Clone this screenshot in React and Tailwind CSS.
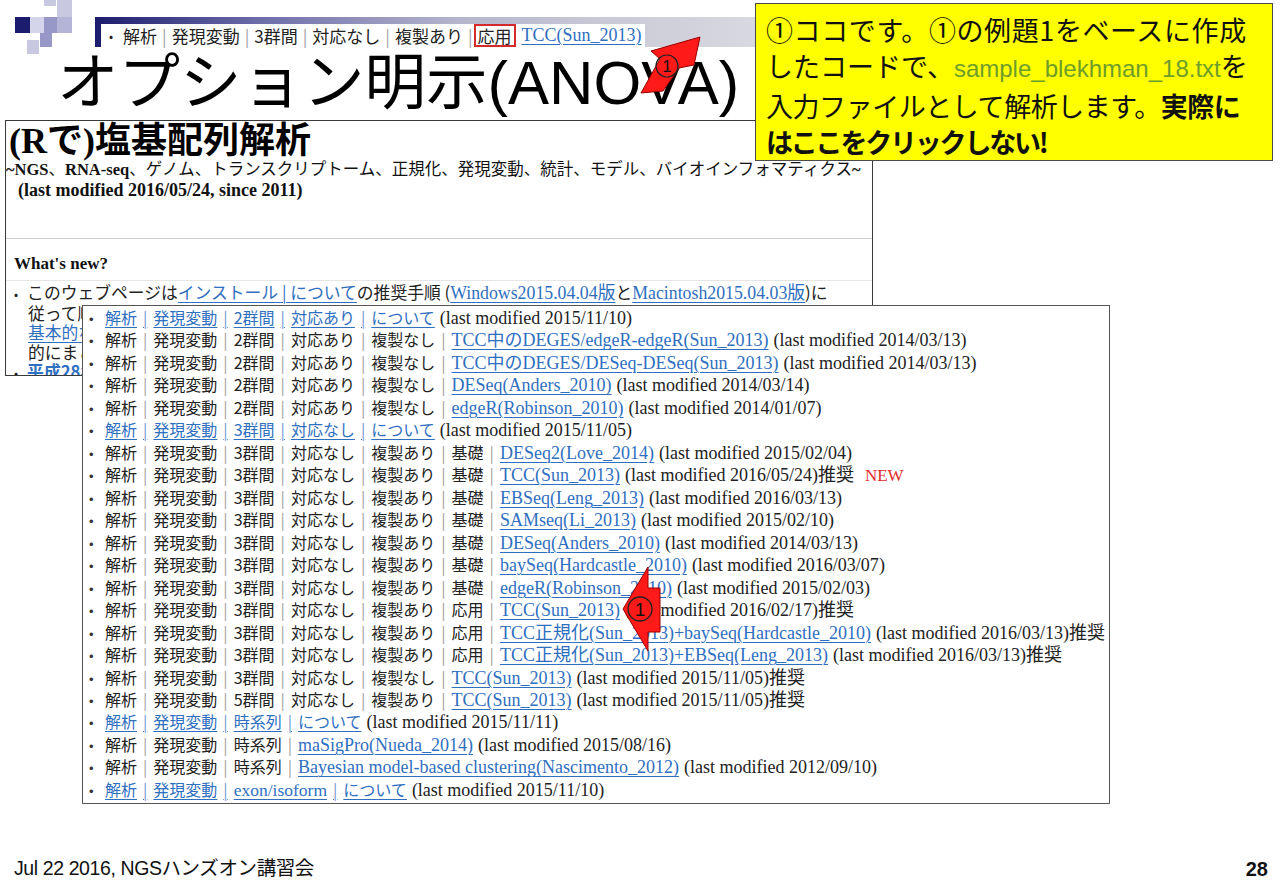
import React from "react";

const JPF = "font-['Noto_Sans_CJK_JP',sans-serif]";
const SERIF = "font-['Liberation_Serif','Noto_Sans_CJK_JP',serif]";

const rows = [
  { cat: ["解析", "発現変動", "2群間", "対応あり"], about: true, date: "2015/11/10" },
  { cat: ["解析", "発現変動", "2群間", "対応あり", "複製なし"], link: "TCC中のDEGES/edgeR-edgeR(Sun_2013)", date: "2014/03/13" },
  { cat: ["解析", "発現変動", "2群間", "対応あり", "複製なし"], link: "TCC中のDEGES/DESeq-DESeq(Sun_2013)", date: "2014/03/13" },
  { cat: ["解析", "発現変動", "2群間", "対応あり", "複製なし"], link: "DESeq(Anders_2010)", date: "2014/03/14" },
  { cat: ["解析", "発現変動", "2群間", "対応あり", "複製なし"], link: "edgeR(Robinson_2010)", date: "2014/01/07" },
  { cat: ["解析", "発現変動", "3群間", "対応なし"], about: true, date: "2015/11/05" },
  { cat: ["解析", "発現変動", "3群間", "対応なし", "複製あり", "基礎"], link: "DESeq2(Love_2014)", date: "2015/02/04" },
  { cat: ["解析", "発現変動", "3群間", "対応なし", "複製あり", "基礎"], link: "TCC(Sun_2013)", date: "2016/05/24", rec: true, isNew: true },
  { cat: ["解析", "発現変動", "3群間", "対応なし", "複製あり", "基礎"], link: "EBSeq(Leng_2013)", date: "2016/03/13" },
  { cat: ["解析", "発現変動", "3群間", "対応なし", "複製あり", "基礎"], link: "SAMseq(Li_2013)", date: "2015/02/10" },
  { cat: ["解析", "発現変動", "3群間", "対応なし", "複製あり", "基礎"], link: "DESeq(Anders_2010)", date: "2014/03/13" },
  { cat: ["解析", "発現変動", "3群間", "対応なし", "複製あり", "基礎"], link: "baySeq(Hardcastle_2010)", date: "2016/03/07" },
  { cat: ["解析", "発現変動", "3群間", "対応なし", "複製あり", "基礎"], link: "edgeR(Robinson_2010)", date: "2015/02/03" },
  { cat: ["解析", "発現変動", "3群間", "対応なし", "複製あり", "応用"], link: "TCC(Sun_2013)", date: "2016/02/17", rec: true },
  { cat: ["解析", "発現変動", "3群間", "対応なし", "複製あり", "応用"], link: "TCC正規化(Sun_2013)+baySeq(Hardcastle_2010)", date: "2016/03/13", rec: true },
  { cat: ["解析", "発現変動", "3群間", "対応なし", "複製あり", "応用"], link: "TCC正規化(Sun_2013)+EBSeq(Leng_2013)", date: "2016/03/13", rec: true },
  { cat: ["解析", "発現変動", "3群間", "対応なし", "複製なし"], link: "TCC(Sun_2013)", date: "2015/11/05", rec: true },
  { cat: ["解析", "発現変動", "5群間", "対応なし", "複製あり"], link: "TCC(Sun_2013)", date: "2015/11/05", rec: true },
  { cat: ["解析", "発現変動", "時系列"], about: true, date: "2015/11/11" },
  { cat: ["解析", "発現変動", "時系列"], link: "maSigPro(Nueda_2014)", date: "2015/08/16" },
  { cat: ["解析", "発現変動", "時系列"], link: "Bayesian model-based clustering(Nascimento_2012)", date: "2012/09/10" },
  { cat: ["解析", "発現変動", "exon/isoform"], about: true, date: "2015/11/10" },
];

function Sep({ blue, m = "mx-[6px]" }) {
  return <span className={`${m} ${blue ? "text-[#6f98d2]" : "text-[#a0a0a0]"}`}>|</span>;
}

function Row({ r }) {
  return (
    <li className="flex items-baseline whitespace-nowrap h-[22.47px] leading-[22.47px]">
      <span className="w-[22px] pl-[6px] text-[#333] text-[13px]">•</span>
      {r.about ? (
        <span className={`${JPF} text-[#2f6fbf] underline decoration-1 underline-offset-[3px] text-[16px]`}>
          {r.cat.map((c, i) => (
            <React.Fragment key={i}>
              {i > 0 && <Sep blue />}
              {c === "exon/isoform" ? <span className={`${SERIF} text-[17.5px]`}>{c}</span> : c}
            </React.Fragment>
          ))}
          <Sep blue />
          について
        </span>
      ) : (
        <>
          <span className={`${JPF} text-[#222] text-[16px]`}>
            {r.cat.map((c, i) => (
              <React.Fragment key={i}>
                {i > 0 && <Sep />}
                {c}
              </React.Fragment>
            ))}
            <Sep />
          </span>
          <span className={`${SERIF} text-[#2f6fbf] underline decoration-1 underline-offset-[3px] text-[18px]`}>{r.link}</span>
        </>
      )}
      <span className={`${SERIF} text-[#222] text-[18px] ml-[5px]`}>
        (last modified {r.date}){r.rec ? "推奨" : ""}
      </span>
      {r.isNew && <span className={`${SERIF} text-[#e02a2a] text-[17px] ml-[11px]`}>NEW</span>}
    </li>
  );
}

function Corner() {
  return (
    <svg width="95" height="80" viewBox="0 0 95 80" className="shrink-0">
      <rect x="15" y="17" width="15" height="16" fill="#1c1c6e" />
      <rect x="44" y="0" width="12" height="6" fill="#c8c8e0" />
      <rect x="57" y="0" width="15" height="17" fill="#c8c8e0" />
      <rect x="30" y="17" width="14" height="16" fill="#d4d4ea" />
      <rect x="44" y="17" width="13" height="16" fill="#9898c8" />
      <rect x="57" y="17" width="15" height="16" fill="#b4b4d8" />
      <rect x="27" y="40" width="12" height="14" fill="#c8c8e0" />
      <rect x="40" y="33" width="12" height="14" fill="#9898c8" />
    </svg>
  );
}

const LINK = "text-[#2f6fbf] underline decoration-1 underline-offset-[3px]";

export default function App() {
  return (
    <div className="relative w-[1280px] h-[886px] bg-white overflow-hidden font-['Liberation_Sans','Noto_Sans_CJK_JP',sans-serif] text-black flex flex-col">
      {/* header row */}
      <div className="flex h-[47px] shrink-0">
        <Corner />
        <div className="mt-[17px] h-[30px] w-[660px] bg-[linear-gradient(to_right,#1c1c6e,#6d6daa_25%,#b5b5cd_55%,#cfcfda_85%,#d8d8e0)] pl-[6px] pt-[7px]">
          <div className={`${JPF} bg-white h-[23px] w-[544px] flex items-center text-[17px] text-[#222] whitespace-nowrap pl-[8px]`}>
            <span className="text-[12px] mr-[10px]">•</span>
            解析<Sep m="mx-[5px]" />発現変動<Sep m="mx-[5px]" />3群間<Sep m="mx-[5px]" />対応なし<Sep m="mx-[5px]" />複製あり<Sep m="ml-[5px] mr-[1px]" />
            <span className="border-2 border-[#d42a2a] h-[23px] px-[2px] leading-[19px]">応用</span>
            <span className={`${SERIF} ml-[6px] ${LINK} text-[18px]`}>TCC(Sun_2013)</span>
          </div>
        </div>
      </div>

      {/* title */}
      <h1 className="ml-[57px] mt-[3px] text-[61.5px] leading-[66px] font-normal shrink-0">オプション明示(ANOVA)</h1>

      {/* web page box 1 */}
      <div className="ml-[5px] mt-[4px] w-[868px] h-[256px] border border-[#3a3a3a] overflow-hidden bg-white shrink-0">
        <div className={`${SERIF} font-bold text-[36px] leading-[38px] pl-[3px] pt-[1px]`}>(Rで)塩基配列解析</div>
        <div className={`${SERIF} text-[16.5px] leading-[20px] whitespace-nowrap text-[#111]`}>
          <b>~NGS</b>、<b>RNA-seq</b>、ゲノム、トランスクリプトーム、正規化、発現変動、統計、モデル、バイオインフォマティクス<b>~</b>
        </div>
        <div className={`${SERIF} font-bold text-[18px] leading-[20px] pl-[12px] text-[#111]`}>(last modified 2016/05/24, since 2011)</div>
        <div className="mt-[38px] border-t border-[#d0d0d0]" />
        <div className={`${SERIF} font-bold text-[17px] leading-[20px] pl-[8px] pt-[15px] text-[#111]`}>What's new?</div>
        <div className="mt-[6px] border-t border-[#e6e6e6]" />
        <div className={`${JPF} text-[16.8px] leading-[19.5px] text-[#222] pl-[8px] pt-[2px] whitespace-nowrap`}>
          <div>
            <span className="text-[12px] mr-[9px]">•</span>このウェブページは
            <span className={LINK}>インストール | について</span>の推奨手順 (
            <span className={`${SERIF} ${LINK} text-[17.8px]`}>Windows2015.04.04版</span>と
            <span className={`${SERIF} ${LINK} text-[17.8px]`}>Macintosh2015.04.03版</span>)に
          </div>
          <div className="pl-[14px]">従って順にインストールしておくとよいです。</div>
          <div className={`pl-[14px] ${LINK}`}>基本的な使い方</div>
          <div className="pl-[14px]">的にまとめています。</div>
          <div>
            <span className="text-[12px] mr-[9px]">•</span>
            <span className={`${LINK} font-bold`}>平成28年度</span>
          </div>
        </div>
      </div>

      {/* footer */}
      <div className="mt-auto h-[40px] flex items-center justify-between pl-[14px] pr-[12px] pt-[6px] shrink-0">
        <span className="text-[19.5px] tracking-[-0.4px] text-[#111]">Jul 22 2016, NGSハンズオン講習会</span>
        <span className="text-[20px] font-bold text-[#111]">28</span>
      </div>

      {/* overlay: list box */}
      <div className="absolute left-[82px] top-[305px] w-[1028px] h-[499px] bg-white border border-[#555]">
        <ul>
          {rows.map((r, i) => (
            <Row key={i} r={r} />
          ))}
        </ul>
      </div>

      {/* overlay: yellow callout */}
      <div className={`absolute left-[755px] top-[3px] w-[518px] h-[158px] bg-[#ffff00] border border-[#4a4a4a] pl-[10px] pt-[8px] ${JPF} text-[27px] leading-[36.3px] text-[#111] whitespace-nowrap`}>
        <div className="tracking-[0.6px]">①ココです。①の例題1をベースに作成</div>
        <div>
          したコードで、<span className="font-['Liberation_Sans',sans-serif] text-[24px] text-[#6e9d2a]">sample_blekhman_18.txt</span>を
        </div>
        <div className="tracking-[-0.45px]">
          入力ファイルとして解析します。<span className="font-bold">実際に</span>
        </div>
        <div className="font-bold tracking-[-2.2px]">はここをクリックしない!</div>
      </div>

      {/* overlay arrows */}
      <svg className="absolute left-0 top-0 pointer-events-none" width="1280" height="886" viewBox="0 0 1280 886">
        <polygon points="700,37 651,51 660,59 641,93 663,91 679,68 694,65" fill="#ff1a1a" stroke="#9a0000" strokeWidth="1" strokeLinejoin="round" />
        <circle cx="667" cy="66" r="11" fill="none" stroke="#222" strokeWidth="1.2" />
        <text x="667" y="72" textAnchor="middle" fontSize="17" fontFamily="Liberation Sans, sans-serif" fill="#111">1</text>

        <polygon points="623,609 648,567 648,588 660,588 660,632 648,632 648,651" fill="#ff1a1a" stroke="#9a0000" strokeWidth="1" strokeLinejoin="round" />
        <circle cx="640" cy="609" r="12" fill="none" stroke="#222" strokeWidth="1.3" />
        <text x="640" y="616" textAnchor="middle" fontSize="19" fontFamily="Liberation Sans, sans-serif" fill="#111">1</text>
      </svg>
    </div>
  );
}
